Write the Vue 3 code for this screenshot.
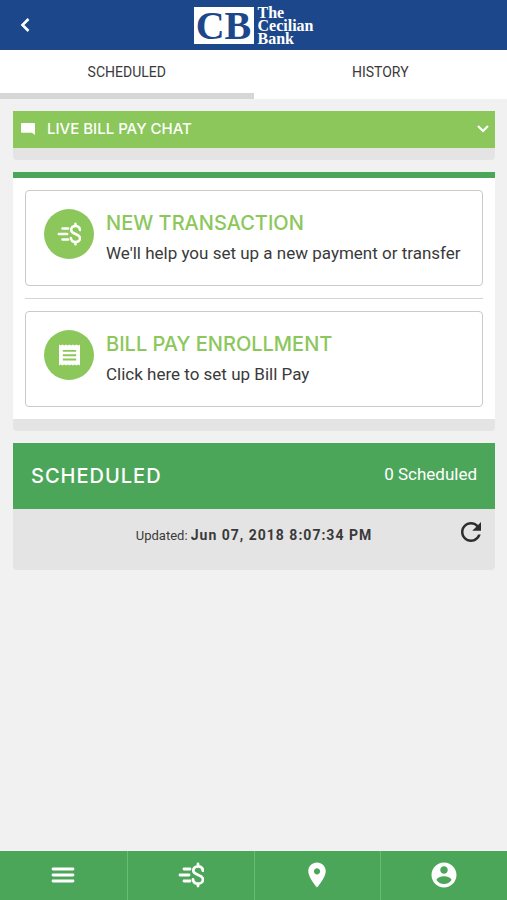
<template>
  <div class="app">
    <!-- Header -->
    <header class="header">
      <button class="back" type="button" aria-label="Back">
        <svg width="12" height="16" viewBox="0 0 12 16" fill="none">
          <path d="M9.500 2L3.500 8l6 6" stroke="currentColor" stroke-width="2.6" />
        </svg>
      </button>
      <div class="logo">
        <span class="logo-mark">CB</span>
        <span class="logo-name">The<br />Cecilian<br />Bank</span>
      </div>
    </header>

    <!-- Tabs -->
    <nav class="tabs">
      <button
        v-for="tab in tabs"
        :key="tab"
        type="button"
        class="tab"
        :class="{ active: tab === activeTab }"
        @click="activeTab = tab"
      >
        {{ tab }}
      </button>
    </nav>

    <main class="content">
      <section class="panel">
        <button class="chat" type="button">
          <svg width="14" height="12" viewBox="0 0 14 12" fill="currentColor">
            <path d="M1 0h12a1 1 0 0 1 1 1v11l-3-2.200H1a1 1 0 0 1-1-1V1a1 1 0 0 1 1-1z" />
          </svg>
          <span class="chat-label">LIVE BILL PAY CHAT</span>
          <svg width="12" height="8" viewBox="0 0 12 8" fill="none">
            <path d="M1 1l5 5 5-5" stroke="currentColor" stroke-width="2.2" />
          </svg>
        </button>
      </section>

      <section class="panel">
        <div class="actions">
          <template v-for="(item, i) in actions" :key="item.title">
            <hr v-if="i > 0" class="divider" />
            <button class="card" type="button">
              <span class="card-icon">
                <svg v-if="item.icon === 'money'" width="24" height="24" viewBox="0 0 26 26" class="line-icon">
                  <path :d="moneyPath" />
                </svg>
                <svg v-else width="21" height="22" viewBox="0 0 22 22">
                  <path fill="#fff" d="M0 0l1.800 1L3.700 0l1.800 1L7.300 0l1.900 1L11 0l1.800 1L14.700 0l1.800 1L18.300 0l1.900 1L22 0v22l-1.800-1-1.900 1-1.800-1-1.800 1-1.900-1L11 22l-1.800-1L7.300 22l-1.800-1L3.700 22l-1.900-1L0 22z" />
                  <path d="M4 6.700h14M4 11.200h14M4 15.700h14" stroke="#8bc75b" stroke-width="2" />
                </svg>
              </span>
              <span class="card-text">
                <span class="card-title">{{ item.title }}</span>
                <span class="card-desc">{{ item.desc }}</span>
              </span>
            </button>
          </template>
        </div>
      </section>

      <section class="scheduled">
        <div class="scheduled-head">
          <h2 class="scheduled-title">SCHEDULED</h2>
          <span class="scheduled-count">0 Scheduled</span>
        </div>
        <div class="updated">
          <p class="updated-text">Updated: <strong>Jun 07, 2018 8:07:34 PM</strong></p>
          <button class="refresh" type="button" aria-label="Refresh">
            <svg width="30" height="30" viewBox="0 0 24 24" fill="currentColor">
              <path d="M17.650 6.350C16.200 4.900 14.210 4 12 4c-4.420 0-7.990 3.580-7.990 8s3.570 8 7.990 8c3.730 0 6.840-2.550 7.730-6h-2.080c-.82 2.330-3.040 4-5.650 4-3.310 0-6-2.690-6-6s2.690-6 6-6c1.660 0 3.140.69 4.220 1.780L13 11h7V4l-2.350 2.350z" />
            </svg>
          </button>
        </div>
      </section>
    </main>

    <!-- Bottom bar -->
    <nav class="bottom-bar">
      <button class="bar-item" type="button" aria-label="Menu">
        <svg width="24" height="26" viewBox="0 0 24 26" class="line-icon">
          <path d="M2 7h20M2 13h20M2 19h20" />
        </svg>
      </button>
      <button class="bar-item" type="button" aria-label="Payments">
        <svg width="26" height="26" viewBox="0 0 26 26" class="line-icon">
          <path :d="moneyPath" />
        </svg>
      </button>
      <button class="bar-item" type="button" aria-label="Locations">
        <svg width="30" height="30" viewBox="0 0 24 24" fill="currentColor">
          <path d="M12 2C8.130 2 5 5.130 5 9c0 5.250 7 13 7 13s7-7.750 7-13c0-3.870-3.130-7-7-7zm0 9.500c-1.380 0-2.500-1.120-2.500-2.500s1.120-2.500 2.500-2.500 2.500 1.120 2.500 2.500-1.120 2.500-2.500 2.500z" />
        </svg>
      </button>
      <button class="bar-item" type="button" aria-label="Profile">
        <svg width="30" height="30" viewBox="0 0 24 24" fill="currentColor">
          <path d="M12 2C6.480 2 2 6.480 2 12s4.480 10 10 10 10-4.480 10-10S17.520 2 12 2zm0 3c1.660 0 3 1.340 3 3s-1.340 3-3 3-3-1.340-3-3 1.340-3 3-3zm0 14.200c-2.500 0-4.710-1.280-6-3.220.03-1.990 4-3.080 6-3.080 1.990 0 5.970 1.090 6 3.080-1.290 1.940-3.500 3.220-6 3.220z" />
        </svg>
      </button>
    </nav>
  </div>
</template>

<script setup>
import { ref } from 'vue'

const tabs = ['SCHEDULED', 'HISTORY']
const activeTab = ref('SCHEDULED')

const actions = [
  {
    icon: 'money',
    title: 'NEW TRANSACTION',
    desc: "We'll help you set up a new payment or transfer",
  },
  {
    icon: 'bill',
    title: 'BILL PAY ENROLLMENT',
    desc: 'Click here to set up Bill Pay',
  },
]

// dollar sign with speed lines, shared by the card and the bottom bar
const moneyPath =
  'M6 7h6M2 13h9M6 19h6M25 8.700C24.600 6 22.700 4.300 20 4.300s-4.700 1.700-4.700 4.300c0 5.100 9.700 3.800 9.700 8.800 0 2.600-2.300 4.300-5 4.300s-4.700-1.700-5-4.400M20 2v2M20 22v2'
</script>

<style>
body {
  margin: 0;
  background: #f1f1f1;
}
</style>

<style scoped>
.app {
  min-height: 100vh;
  display: flex;
  flex-direction: column;
  font-family: Roboto, 'Liberation Sans', sans-serif;
  color: #3a3a3a;
}

button {
  margin: 0;
  padding: 0;
  border: none;
  background: none;
  font: inherit;
  color: inherit;
  cursor: pointer;
}

svg {
  display: block;
  flex-shrink: 0;
}

.line-icon {
  fill: none;
  stroke: #fff;
  stroke-width: 2.8;
  stroke-linecap: round;
}

/* ---- header ---- */
.header {
  display: grid;
  grid-template-columns: 50px 1fr 50px;
  align-items: center;
  height: 50px;
  background: #1c478a;
  color: #fff;
}

.back {
  display: flex;
  align-items: center;
  justify-content: center;
  height: 50px;
}

.logo {
  display: flex;
  align-items: center;
  justify-content: center;
  gap: 4px;
  font-family: 'Liberation Serif', 'Times New Roman', serif;
  font-weight: 700;
}

.logo-mark {
  width: 60px;
  background: #fff;
  color: #1c478a;
  font-size: 40px;
  line-height: 37px;
  text-align: center;
}

.logo-name {
  font-size: 16px;
  line-height: 13px;
}

/* ---- tabs ---- */
.tabs {
  display: grid;
  grid-template-columns: 1fr 1fr;
  background: #fff;
}

.tab {
  height: 49px;
  border-bottom: 6px solid transparent;
  font-size: 14px;
}

.tab.active {
  border-bottom-color: #d6d6d6;
}

/* ---- content ---- */
.content {
  flex: 1;
  display: flex;
  flex-direction: column;
  gap: 12px;
  padding: 12px 12px 24px 13px;
}

.panel {
  border-bottom: 12px solid #e4e4e4;
  border-radius: 0 0 4px 4px;
}

.chat {
  display: flex;
  align-items: center;
  gap: 12px;
  width: 100%;
  height: 37px;
  padding: 0 6px 2px 8px;
  background: #8bc75b;
  color: #fff;
}

.chat-label {
  flex: 1;
  font-family: Inter, 'Liberation Sans', sans-serif;
  font-size: 15px;
  font-weight: 500;
  text-align: left;
}

.actions {
  padding: 12px;
  border-top: 6px solid #4ca65a;
  background: #fff;
}

.card {
  display: flex;
  align-items: flex-start;
  gap: 12px;
  width: 100%;
  min-height: 96px;
  padding: 18px;
  border: 1px solid #c9cacc;
  border-radius: 4px;
  text-align: left;
}

.card-icon {
  display: flex;
  align-items: center;
  justify-content: center;
  flex-shrink: 0;
  width: 50px;
  height: 50px;
  border-radius: 50%;
  background: #8bc75b;
}

.card-text {
  display: flex;
  flex-direction: column;
  gap: 4px;
}

.card-title {
  font-family: Inter, 'Liberation Sans', sans-serif;
  font-size: 20px;
  font-weight: 500;
  line-height: 28px;
  color: #8bc75b;
}

.card-desc {
  font-size: 17px;
  line-height: 24px;
}

.divider {
  height: 1px;
  margin: 12px 0;
  border: none;
  background: #d4d4d4;
}

/* ---- scheduled ---- */
.scheduled-head {
  display: flex;
  align-items: center;
  justify-content: space-between;
  height: 66px;
  padding: 0 18px;
  background: #4ca65a;
  color: #fff;
}

.scheduled-title {
  margin: 0;
  font-family: Inter, 'Liberation Sans', sans-serif;
  font-size: 20px;
  font-weight: 500;
  letter-spacing: 1px;
}

.scheduled-count {
  padding-bottom: 4px;
  font-size: 17px;
}

.updated {
  display: grid;
  grid-template-columns: 40px 1fr 40px;
  align-items: start;
  height: 61px;
  padding: 8px 4px 0;
  box-sizing: border-box;
  background: #e4e4e4;
  border-radius: 0 0 4px 4px;
}

.updated-text {
  grid-column: 2;
  margin: 0;
  font-size: 13px;
  line-height: 36px;
  text-align: center;
}

.updated-text strong {
  font-size: 14px;
  letter-spacing: 1px;
}

.refresh {
  display: flex;
  justify-content: center;
  color: #2d2d2d;
}

/* ---- bottom bar ---- */
.bottom-bar {
  position: sticky;
  bottom: 0;
  display: grid;
  grid-template-columns: repeat(4, 1fr);
  background: #4ca65a;
  color: #fff;
}

.bar-item {
  display: flex;
  align-items: center;
  justify-content: center;
  height: 49px;
  padding-bottom: 2px;
}

.bar-item + .bar-item {
  border-left: 1px solid #6abb76;
}
</style>
